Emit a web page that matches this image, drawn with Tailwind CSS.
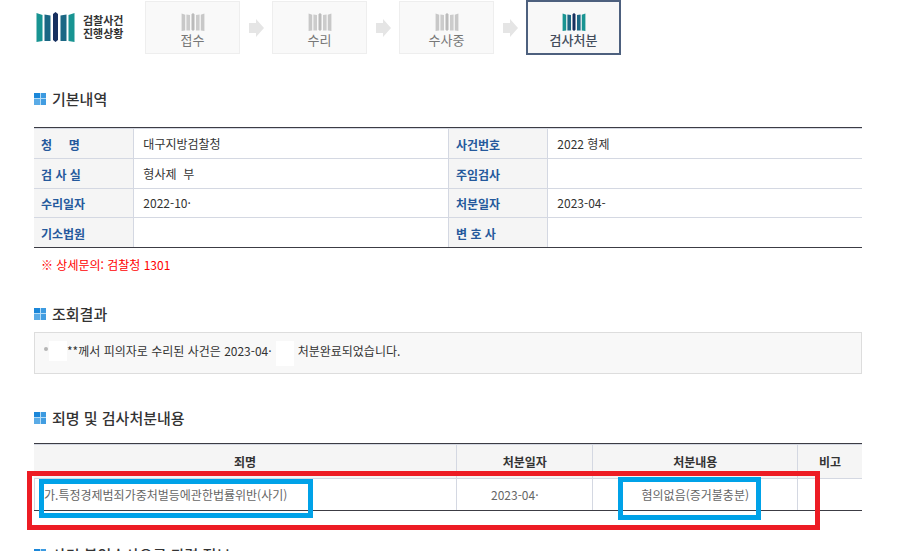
<!DOCTYPE html>
<html lang="ko">
  <head>
    <meta charset="UTF-8" />
    <meta name="viewport" content="width=device-width, initial-scale=1.0" />
    <title>검찰사건 진행상황</title>
    <script src="https://cdn.jsdelivr.net/npm/@tailwindcss/browser@4"></script>
  </head>

  <body class="h-screen overflow-hidden bg-white pl-[34px] pr-[45px] font-['Noto_Sans_CJK_KR',sans-serif] text-xs text-[#333]">
    <svg class="hidden">
      <symbol id="pillars" viewBox="0 0 38 30">
        <path class="fill-(--outer)" d="M0 1l6 2v26l-6 1zM38 1l-6 2v26l6 1z" />
        <path class="fill-(--inner)" d="M8 2.500l6 1V29H8zM30 2.500l-6 1V29h6z" />
        <path class="fill-(--center)" d="M16.500 2L19 0l2.500 2v26L19 30l-2.500-2z" />
      </symbol>
      <symbol id="bullet" viewBox="0 0 12 12">
        <path fill="#1b87d9" d="M0 0h6v6H0z" />
        <path fill="#3c9ae0" d="M6 0h6v6H6z" />
        <path fill="#5aabe6" d="M0 6h6v6H0z" />
        <path fill="#429de1" d="M6 6h6v6H6z" />
        <path fill="#b5dcf7" d="M6 0h1v12H6zM0 5h12v1H0z" />
      </symbol>
      <symbol id="arrow" viewBox="0 0 16 18">
        <path fill="#e5e5e5" d="M1 4h7V0l8 9-8 9v-4H1z" />
      </symbol>
    </svg>

    <!-- 진행 단계 -->
    <header class="flex h-[55px] items-center">
      <a href="#" class="flex w-[111px] shrink-0 items-center gap-2 pb-[2px] pl-[2px] font-bold">
        <svg class="h-[30px] w-[39px] shrink-0 [--center:#17305f] [--inner:#1b6784] [--outer:#189492]"><use href="#pillars" /></svg>
        <span class="text-[11px] leading-[13px] whitespace-nowrap">검찰사건<br />진행상황</span>
      </a>
      <ol class="flex items-center gap-2 text-[13px] leading-[18px] text-[#777]">
        <li class="flex h-[53px] w-[95px] flex-col items-center justify-center border border-[#eee] bg-[#f9f9f9] pt-[6px]">
          <svg class="h-[18px] w-[26px] [--center:#bbb] [--inner:#ccc] [--outer:#c8c8c8]"><use href="#pillars" /></svg>
          접수
        </li>
        <li><svg class="h-[18px] w-4"><use href="#arrow" /></svg></li>
        <li class="flex h-[53px] w-[95px] flex-col items-center justify-center border border-[#eee] bg-[#f9f9f9] pt-[6px]">
          <svg class="h-[18px] w-[26px] [--center:#bbb] [--inner:#ccc] [--outer:#c8c8c8]"><use href="#pillars" /></svg>
          수리
        </li>
        <li><svg class="h-[18px] w-4"><use href="#arrow" /></svg></li>
        <li class="flex h-[53px] w-[95px] flex-col items-center justify-center border border-[#eee] bg-[#f9f9f9] pt-[6px]">
          <svg class="h-[18px] w-[26px] [--center:#bbb] [--inner:#ccc] [--outer:#c8c8c8]"><use href="#pillars" /></svg>
          수사중
        </li>
        <li><svg class="h-[18px] w-4"><use href="#arrow" /></svg></li>
        <li class="flex h-[55px] w-[95px] flex-col items-center justify-center border-2 border-[#4d607e] bg-[#f8f8f8] pt-[6px] font-medium text-[#444d5c]">
          <svg class="h-[18px] w-[26px] [--center:#17305f] [--inner:#1b6784] [--outer:#189492]"><use href="#pillars" /></svg>
          검사처분
        </li>
      </ol>
    </header>

    <main>
      <section class="pt-[34px]">
        <h2 class="flex h-5 items-center gap-[6px] text-[15px] font-medium">
          <svg class="size-3"><use href="#bullet" /></svg>기본내역
        </h2>
        <table class="mt-[18px] w-full table-fixed border-separate border-spacing-0 border-y border-[#3c3c44] text-left leading-4">
          <colgroup>
            <col class="w-[12%]" />
            <col class="w-[38%]" />
            <col class="w-[12%]" />
            <col class="w-[38%]" />
          </colgroup>
          <tbody class="[&_td]:border-t [&_td]:border-l [&_td]:border-[#d4d8e2] [&_td]:px-[9px] [&_th]:border-t [&_th]:border-[#d4d8e2] [&_th]:bg-[#f5f5f5] [&_th]:px-[7px] [&_th]:pt-[2px] [&_th]:font-bold [&_th]:whitespace-pre [&_th]:text-[#25599c] [&_td+th]:border-l">
            <tr class="h-[30px]">
              <th scope="row">청     명</th>
              <td>대구지방검찰청</td>
              <th scope="row">사건번호</th>
              <td>2022 형제</td>
            </tr>
            <tr class="h-[30px]">
              <th scope="row">검 사 실</th>
              <td class="whitespace-pre">형사제  부</td>
              <th scope="row">주임검사</th>
              <td></td>
            </tr>
            <tr class="h-[29px]">
              <th scope="row">수리일자</th>
              <td>2022-10·</td>
              <th scope="row">처분일자</th>
              <td>2023-04-</td>
            </tr>
            <tr class="h-[30px]">
              <th scope="row">기소법원</th>
              <td></td>
              <th scope="row">변 호 사</th>
              <td></td>
            </tr>
          </tbody>
        </table>
        <p class="mt-[7px] pl-[7px] leading-5 text-[#f00]">※ 상세문의: 검찰청 1301</p>
      </section>

      <section class="pt-[29px]">
        <h2 class="flex h-5 items-center gap-[6px] text-[15px] font-medium">
          <svg class="size-3"><use href="#bullet" /></svg>조회결과
        </h2>
        <p class="mt-2 flex h-[42px] items-center border border-[#ddd] bg-[#f8f8f8] pb-1 pl-[9px] whitespace-nowrap">
          <span class="mr-px mb-1 size-1 rounded-full bg-[#b5b5b5]"></span>
          <span class="h-5 w-[18px] bg-white"></span>
          **께서 피의자로 수리된 사건은 2023-04·
          <span class="mt-1 mr-1 ml-1 h-[25px] w-[18px] bg-white"></span>
          처분완료되었습니다.
        </p>
      </section>

      <section class="relative pt-[34px]">
        <h2 class="flex h-5 items-center gap-[6px] text-[15px] font-medium">
          <svg class="size-3"><use href="#bullet" /></svg>죄명 및 검사처분내용
        </h2>
        <table class="mt-[15px] w-full table-fixed border-separate border-spacing-0 border-y border-[#3c3c44] leading-4">
          <colgroup>
            <col class="w-[51%]" />
            <col class="w-[136px]" />
            <col class="w-[205px]" />
            <col />
          </colgroup>
          <thead class="bg-[#f5f5f5] [&_th]:border-t [&_th]:border-[#d4d8e2] [&_th]:font-bold [&_th+th]:border-l">
            <tr class="h-[34px]">
              <th scope="col">죄명</th>
              <th scope="col">처분일자</th>
              <th scope="col">처분내용</th>
              <th scope="col">비고</th>
            </tr>
          </thead>
          <tbody class="text-[#666] [&_td]:border-t [&_td]:border-l [&_td]:border-[#d4d8e2]">
            <tr class="h-8">
              <td class="pl-[9px]">가.특정경제범죄가중처벌등에관한법률위반(사기)</td>
              <td class="pr-5 text-center">2023-04·</td>
              <td class="text-center">혐의없음(증거불충분)</td>
              <td></td>
            </tr>
          </tbody>
        </table>
        <!-- 강조 표시 -->
        <div class="absolute top-[97px] -left-[7px] h-[59px] w-[793px] border-[5px] border-[#ed1c24]"></div>
        <div class="absolute top-[105px] left-[5px] h-[39px] w-[274px] border-[5px] border-[#00a2e8]"></div>
        <div class="absolute top-[103px] left-[584px] h-[43px] w-[143px] border-[5px] border-[#00a2e8]"></div>
      </section>

      <section class="pt-[34px]">
        <h2 class="flex h-5 items-center gap-[6px] text-[15px] font-medium">
          <svg class="size-3"><use href="#bullet" /></svg>사건 불인수사으를 관련 정보
        </h2>
      </section>
    </main>
  </body>
</html>
